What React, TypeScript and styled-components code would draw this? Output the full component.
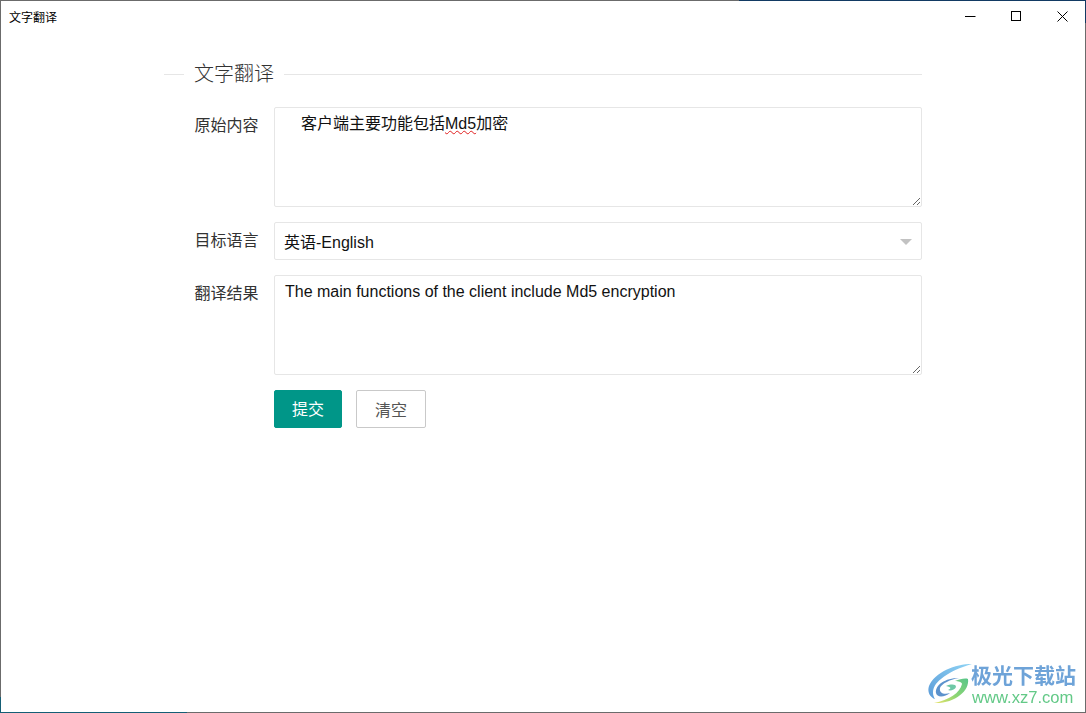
import React from "react";
import styled, { createGlobalStyle } from "styled-components";

const GlobalStyle = createGlobalStyle`
  html, body {
    margin: 0;
    padding: 0;
    background: #fff;
  }
  body {
    font-family: "Liberation Sans", "Noto Sans CJK SC", sans-serif;
    color: #333;
  }
`;

const Window = styled.div`
  position: relative;
  box-sizing: border-box;
  width: 1086px;
  height: 713px;
  padding: 1px;
  overflow: hidden;
  background:
    linear-gradient(90deg, #6b6b6b 739px, #123a63 739px) 0 0 / 100% 1px no-repeat,
    linear-gradient(90deg, #155e75 187px, #6b6b6b 187px) 0 100% / 100% 1px no-repeat,
    linear-gradient(180deg, #6b6b6b 697px, #155e75 697px) 0 0 / 1px 100% no-repeat,
    linear-gradient(180deg, #123a63 23px, #6b6b6b 23px) 100% 0 / 1px 100% no-repeat;
`;

const Surface = styled.div`
  height: 100%;
  background: #fff;
  display: flex;
  flex-direction: column;
`;

const TitleBar = styled.div`
  height: 30px;
  flex: none;
  display: flex;
  align-items: center;
  justify-content: space-between;
`;

const WindowTitle = styled.span`
  margin-left: 8px;
  font-size: 12px;
  color: #000;
`;

const WindowButtons = styled.div`
  display: flex;
`;

const WindowButton = styled.div`
  width: 46px;
  height: 30px;
  display: flex;
  align-items: center;
  justify-content: center;
`;

const Form = styled.div`
  width: 758px;
  margin: 33px 0 0 163px;
  display: flex;
  flex-direction: column;
`;

const Legend = styled.div`
  display: flex;
  align-items: center;
  gap: 10px;
  height: 20px;
  margin-bottom: 23px;
  font-size: 20px;
  font-weight: 300;
  color: #333;
`;

const LegendTitle = styled.span`
  line-height: 20px;
  height: 20px;
`;

const LegendLine = styled.div<{ $grow?: boolean }>`
  height: 1px;
  background: #e6e6e6;
  width: 20px;
  flex: ${({ $grow }) => ($grow ? "1" : "none")};
`;

const Row = styled.div`
  display: flex;
  align-items: flex-start;
  margin-bottom: 15px;
`;

const Label = styled.label`
  width: 110px;
  box-sizing: border-box;
  padding: 9px 15.5px 0 0;
  text-align: right;
  font-size: 16px;
  line-height: 20px;
  color: #333;
  flex: none;
`;

const TextBox = styled.div<{ $indent?: boolean }>`
  box-sizing: border-box;
  width: 648px;
  height: 100px;
  padding: 6px 10px;
  border: 1px solid #e6e6e6;
  border-radius: 2px;
  font-size: 16px;
  line-height: 20px;
  color: #111;
  text-indent: ${({ $indent }) => ($indent ? "16px" : "0")};
  overflow: auto;
  resize: both;
`;

const Misspelt = styled.span`
  text-decoration: underline wavy #e02020 1px;
  text-underline-offset: 1px;
`;

const SelectBox = styled.div`
  position: relative;
  box-sizing: border-box;
  width: 648px;
  height: 38px;
  padding: 0 9px;
  border: 1px solid #e6e6e6;
  border-radius: 2px;
  display: flex;
  align-items: center;
  font-size: 16px;
  color: #111;
`;

const Caret = styled.div`
  position: absolute;
  right: 9px;
  top: 16px;
  width: 0;
  height: 0;
  border-style: solid;
  border-width: 6px 6px 0;
  border-color: #c2c2c2 transparent transparent;
`;

const Buttons = styled.div`
  display: flex;
  gap: 14px;
  margin-left: 110px;
`;

const Button = styled.button<{ $primary?: boolean }>`
  box-sizing: border-box;
  height: 38px;
  width: ${({ $primary }) => ($primary ? "68px" : "70px")};
  padding: ${({ $primary }) => ($primary ? "0 0 2px 0" : "0")};
  border: 1px solid ${({ $primary }) => ($primary ? "#009688" : "#c9c9c9")};
  border-radius: 2px;
  background: ${({ $primary }) => ($primary ? "#009688" : "#fff")};
  color: ${({ $primary }) => ($primary ? "#fff" : "#555")};
  font-family: inherit;
  font-size: 16px;
`;

const Watermark = styled.div`
  position: absolute;
  right: 10px;
  bottom: 3px;
  display: flex;
  align-items: flex-end;
  filter: blur(0.35px);
`;

const WatermarkLogo = styled.svg`
  width: 60px;
  height: 55px;
  margin-right: -10px;
  flex: none;
`;

const WatermarkText = styled.div`
  display: flex;
  flex-direction: column;
  padding-bottom: 3px;
`;

const WatermarkName = styled.div`
  font-size: 21px;
  line-height: 26px;
  font-weight: 700;
  color: #6ea3d8;
  white-space: nowrap;
`;

const WatermarkUrl = styled.div`
  margin-left: 1px;
  font-size: 16.6px;
  line-height: 18px;
  color: #63c987;
  white-space: nowrap;
`;

const App = () => {
  return (
    <>
      <GlobalStyle />
      <Window>
        <Surface>
          <TitleBar>
            <WindowTitle>文字翻译</WindowTitle>
            <WindowButtons>
              <WindowButton>
                <svg width="11" height="11" viewBox="0 0 11 11">
                  <path d="M0 5.5H10.5" stroke="#000" strokeWidth="1" fill="none" />
                </svg>
              </WindowButton>
              <WindowButton>
                <svg width="11" height="11" viewBox="0 0 11 11">
                  <rect x="0.5" y="0.5" width="9" height="9" stroke="#000" fill="none" />
                </svg>
              </WindowButton>
              <WindowButton>
                <svg width="11" height="11" viewBox="0 0 11 11">
                  <path d="M0.5 0.5L10.5 10.5M10.5 0.5L0.5 10.5" stroke="#000" strokeWidth="1" fill="none" />
                </svg>
              </WindowButton>
            </WindowButtons>
          </TitleBar>
          <Form>
            <Legend>
              <LegendLine />
              <LegendTitle>文字翻译</LegendTitle>
              <LegendLine $grow />
            </Legend>
            <Row>
              <Label>原始内容</Label>
              <TextBox $indent>
                客户端主要功能包括<Misspelt>Md5</Misspelt>加密
              </TextBox>
            </Row>
            <Row>
              <Label>目标语言</Label>
              <SelectBox>
                英语-English
                <Caret />
              </SelectBox>
            </Row>
            <Row>
              <Label>翻译结果</Label>
              <TextBox>The main functions of the client include Md5 encryption</TextBox>
            </Row>
            <Buttons>
              <Button $primary>提交</Button>
              <Button>清空</Button>
            </Buttons>
          </Form>
        </Surface>
        <Watermark>
          <WatermarkLogo viewBox="0 0 60 55">
            <defs>
              <linearGradient id="swirlBlue" x1="1" y1="0" x2="0" y2="1">
                <stop offset="0" stopColor="#8fd4f5" />
                <stop offset="1" stopColor="#5b9bd8" />
              </linearGradient>
              <linearGradient id="swirlGreen" x1="1" y1="0" x2="0" y2="1">
                <stop offset="0" stopColor="#58c58a" />
                <stop offset="0.55" stopColor="#8ed672" />
                <stop offset="1" stopColor="#e9e36a" />
              </linearGradient>
            </defs>
            <path d="M51 9C34 9 14 17 8 31C6 37 9 42 14 44C10 38 12 30 20 24C28 17 40 12 51 9Z" fill="url(#swirlBlue)" />
            <path d="M15 38C14 30 24 23 38 23C30 24 20 29 19 33C18 38 23 40 29 38C24 42 16 43 15 38Z" fill="#5c92cc" />
            <path d="M47 24C49 36 33 49 13 48C28 45 39 38 41 29C41 27 37 26 34 26C39 24 44 23 47 24Z" fill="url(#swirlGreen)" />
            <path d="M25 31C30 29 35 29 35 32C34 35 29 36 27 35C30 34 31 32 25 31Z" fill="#6fc8a6" />
          </WatermarkLogo>
          <WatermarkText>
            <WatermarkName>极光下载站</WatermarkName>
            <WatermarkUrl>www.xz7.com</WatermarkUrl>
          </WatermarkText>
        </Watermark>
      </Window>
    </>
  );
};

export default App;
